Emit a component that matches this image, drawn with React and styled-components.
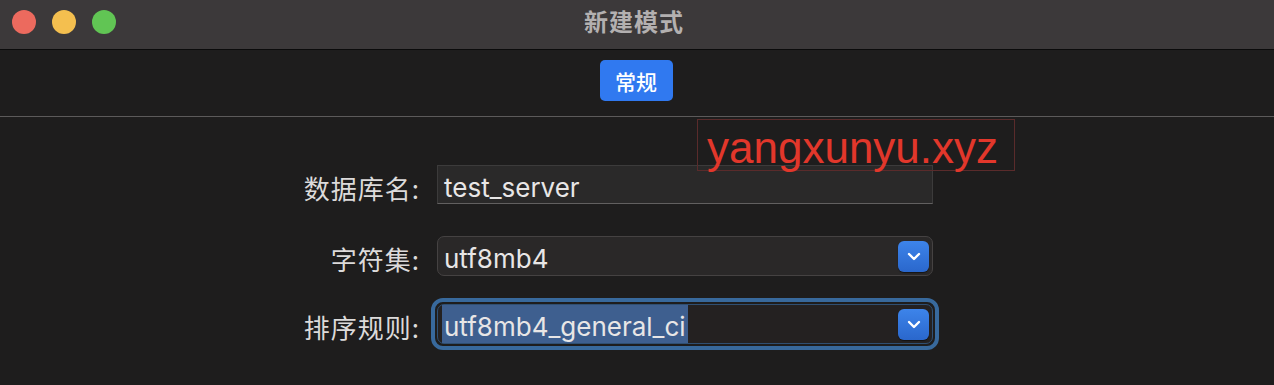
import React from "react";
import styled, { createGlobalStyle } from "styled-components";

const GlobalStyle = createGlobalStyle`
  html, body {
    margin: 0;
    padding: 0;
    background: #1e1d1d;
    overflow: hidden;
  }
  * { box-sizing: border-box; }
`;

const cjk = `"Noto Sans CJK SC", "Noto Sans", sans-serif`;
const latin = `Inter, "Noto Sans CJK SC", sans-serif`;

const Window = styled.div`
  width: 1274px;
  height: 385px;
  background: #1e1d1d;
  position: relative;
  display: flex;
  flex-direction: column;
`;

const TitleBar = styled.div`
  height: 50px;
  background: #3c393a;
  border-bottom: 1px solid #0b0b0b;
  display: grid;
  grid-template-columns: 1fr auto 1fr;
  align-items: center;
  padding: 0 12px;
`;

const Lights = styled.div`
  display: flex;
  gap: 16px;
  margin-top: -5px;
`;

const Light = styled.span`
  width: 24px;
  height: 24px;
  border-radius: 50%;
  background: ${(p) => p.color};
`;

const Title = styled.div`
  font-family: ${cjk};
  font-size: 24px;
  font-weight: 600;
  color: #b3b0b0;
  margin-top: -8px;
  margin-left: -6px;
  letter-spacing: 1px;
`;

const Toolbar = styled.div`
  height: 67px;
  border-bottom: 1px solid #5c5a5a;
  display: flex;
  justify-content: center;
  padding-top: 10px;
`;

const TabButton = styled.button`
  width: 73px;
  height: 41px;
  margin-left: -2px;
  border: none;
  border-radius: 5px;
  background: #3079f0;
  color: #fff;
  font-family: ${cjk};
  font-size: 21px;
  font-weight: 500;
  padding: 0;
`;

const Form = styled.div`
  display: grid;
  grid-template-columns: 420px 496px;
  column-gap: 17px;
  align-items: center;
  padding-top: 48px;
`;

const Label = styled.label`
  font-family: ${cjk};
  font-size: 26px;
  line-height: 32px;
  color: #dcdada;
  text-align: right;
  letter-spacing: 1px;
  padding-top: 6px;
  margin-top: ${(p) => p.gap || 0}px;
`;

const TextInput = styled.div`
  height: 39px;
  background: #2a2929;
  border: 1px solid #3c3b3b;
  border-bottom-color: #626060;
  display: flex;
  align-items: center;
  padding: 6px 0 0 6px;
  font-family: ${latin};
  font-size: 26px;
  color: #e8e6e6;
`;

const SelectWrap = styled.div`
  margin: ${(p) => (p.focused ? "-6px" : "0")};
  margin-top: ${(p) => (p.gap || 0) - (p.focused ? 6 : 0)}px;
  padding: ${(p) => (p.focused ? "2px" : "0")};
  border-radius: ${(p) => (p.focused ? "12px" : "7px")};
  border: ${(p) => (p.focused ? "4px solid #38699c" : "none")};
`;

const Select = styled.div`
  height: 40px;
  border-radius: 7px;
  background: ${(p) => (p.focused ? "#242121" : "#2a2828")};
  border: 1px solid ${(p) => (p.focused ? "#2f4f72" : "#454242")};
  display: flex;
  align-items: center;
  justify-content: space-between;
  padding: 0 3px 0 4px;
  font-family: ${latin};
  font-size: 26px;
  color: #e8e6e6;
`;

const Value = styled.span`
  padding: 5px 2px 0;
  line-height: 33px;
  background: ${(p) => (p.selected ? "#3e5f8f" : "transparent")};
`;

const Arrow = styled.span`
  width: 31px;
  height: 31px;
  border-radius: 6px;
  background: linear-gradient(#3d84ea, #2a67cc);
  box-shadow: 0 1px 1px rgba(0, 0, 0, 0.5);
  display: flex;
  align-items: center;
  justify-content: center;
`;

const Watermark = styled.div`
  position: absolute;
  left: 697px;
  top: 119px;
  width: 318px;
  height: 52px;
  border: 1px solid #5a2b2b;
  font-family: "Liberation Sans", Arial, sans-serif;
  font-size: 44px;
  line-height: 50px;
  color: #e2372b;
  padding: 3px 0 0 9px;
`;

const Chevron = () => (
  <svg width="14" height="9" viewBox="0 0 14 9">
    <path d="M2 2l5 5 5-5" fill="none" stroke="#fff" strokeWidth="2.4" strokeLinecap="round" strokeLinejoin="round" />
  </svg>
);

export default function App() {
  return (
    <Window>
      <GlobalStyle />
      <TitleBar>
        <Lights>
          <Light color="#ec6a5e" />
          <Light color="#f4bf4f" />
          <Light color="#61c554" />
        </Lights>
        <Title>新建模式</Title>
        <div />
      </TitleBar>
      <Toolbar>
        <TabButton>常规</TabButton>
      </Toolbar>
      <Form>
        <Label>数据库名:</Label>
        <TextInput>test_server</TextInput>
        <Label gap={32}>字符集:</Label>
        <SelectWrap gap={32}>
          <Select>
            <Value>utf8mb4</Value>
            <Arrow><Chevron /></Arrow>
          </Select>
        </SelectWrap>
        <Label gap={28}>排序规则:</Label>
        <SelectWrap focused gap={28}>
          <Select focused>
            <Value selected>utf8mb4_general_ci</Value>
            <Arrow><Chevron /></Arrow>
          </Select>
        </SelectWrap>
      </Form>
      <Watermark>yangxunyu.xyz</Watermark>
    </Window>
  );
}
